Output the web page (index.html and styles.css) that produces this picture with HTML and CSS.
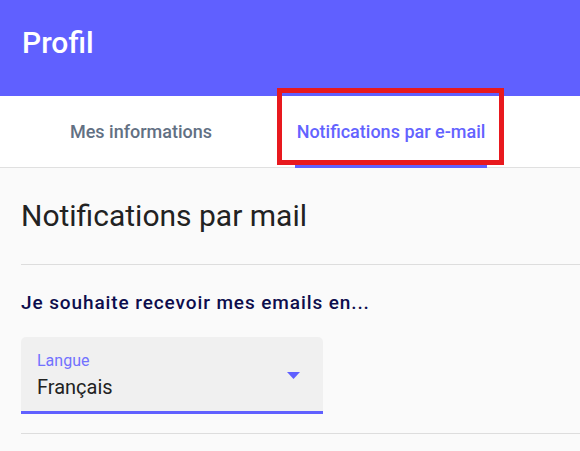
FILE: index.html
```html
<!DOCTYPE html>
<html lang="fr">
<head>
<meta charset="utf-8">
<title>Profil</title>
<link rel="stylesheet" href="styles.css">
</head>
<body>
<header class="topbar">
  <h1 class="title">Profil</h1>
</header>
<nav class="tabs">
  <div class="tab"><span class="tab-label">Mes informations</span></div>
  <div class="tab tab-active"><span class="tab-label">Notifications par e-mail<span class="indicator"></span></span></div>
</nav>
<main class="content">
  <h2 class="heading">Notifications par mail</h2>
  <hr class="divider">
  <p class="question">Je souhaite recevoir mes emails en...</p>
  <div class="select">
    <div class="select-text">
      <span class="select-label">Langue</span>
      <span class="select-value">Français</span>
    </div>
    <svg class="select-arrow" width="13" height="7" viewBox="0 0 13 7"><polygon points="0,0 13,0 6.5,7" fill="#6060ff"/></svg>
  </div>
  <hr class="divider divider-bottom">
</main>
<div class="highlight"></div>
</body>
</html>
```
FILE: styles.css
```css
* { box-sizing: border-box; }
html, body { margin: 0; padding: 0; }
body {
  background: #fafafa;
  font-family: Roboto, "Noto Sans", Arial, sans-serif;
  width: 580px;
  height: 451px;
  overflow: hidden;
  position: relative;
}
.topbar {
  background: #6060ff;
  height: 96px;
  padding: 25px 0 0 22px;
}
.title {
  margin: 0;
  color: #ffffff;
  font-size: 30px;
  line-height: 36px;
  font-weight: 500;
}
.tabs {
  display: flex;
  background: #ffffff;
  height: 72px;
  border-bottom: 1px solid #e0e0e0;
  padding-left: 16px;
}
.tab {
  width: 250px;
  display: flex;
  align-items: center;
  justify-content: center;
  height: 71px;
  font-size: 18px;
  font-weight: 500;
  color: #627083;
}
.tab-label {
  position: relative;
  line-height: 71px;
  height: 71px;
  display: block;
}
.tab-active { color: #6363ff; }
.indicator {
  position: absolute;
  left: -2px;
  right: -2px;
  bottom: -1px;
  height: 3px;
  background: #6060ff;
}
.content {
  padding: 30px 0 0 21px;
}
.heading {
  margin: 0;
  font-size: 30px;
  line-height: 36px;
  font-weight: 400;
  color: #222222;
}
.divider {
  margin: 30px 0 0 0;
  border: 0;
  height: 1px;
  background: #dddddd;
}
.question {
  margin: 26px 0 0 0;
  font-size: 19px;
  line-height: 24px;
  font-weight: 500;
  letter-spacing: 0.9px;
  color: #0d0d4d;
}
.select {
  margin-top: 22px;
  width: 302px;
  background: #f0f0f0;
  border-radius: 5px 5px 0 0;
  border-bottom: 3px solid #6060ff;
  padding: 14px 23px 12px 16px;
  display: flex;
  align-items: center;
}
.select-text {
  flex: 1;
  display: flex;
  flex-direction: column;
  gap: 4px;
}
.select-label {
  font-size: 16px;
  line-height: 20px;
  color: #7272ff;
}
.select-value {
  font-size: 20px;
  line-height: 24px;
  color: #222222;
}
.select-arrow { display: block; }
.divider-bottom { margin-top: 19px; }
.highlight {
  position: absolute;
  left: 277px;
  top: 88px;
  width: 227px;
  height: 77px;
  border: 5px solid #e8191e;
}
```
